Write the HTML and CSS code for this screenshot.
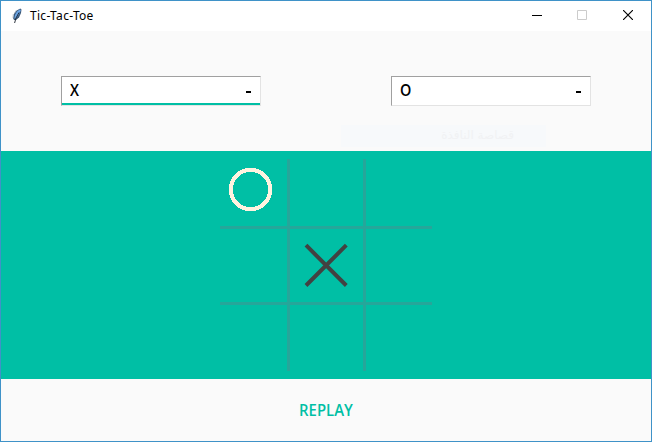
FILE: index.html
```html
<!DOCTYPE html>
<html lang="en">
<head>
<meta charset="utf-8">
<title>Tic-Tac-Toe</title>
<link rel="stylesheet" href="styles.css">
</head>
<body>
<div class="window">
  <header class="titlebar">
    <svg class="feather" width="12" height="18" viewBox="0 0 12 18">
      <path d="M9.300 1.500 L10.500 2.500 L10 6 L8 10.500 L5 13 L3 13 L2 11 L3 7 L5.300 3.800 Z" fill="#3b5878"/>
      <path d="M9 2.200 L9.800 3.500 L7.500 8 L4.800 11.800 L3.300 11.500 L4 8 L6 4.500 Z" fill="#6ba5e6"/>
      <path d="M8 5.500 L5 11 L3.600 16" fill="none" stroke="#18202b" stroke-width=".9"/>
      <path d="M2.300 7 L2 11 M5.200 3.300 L3.600 6" fill="none" stroke="#a9b5c2" stroke-width=".8"/>
    </svg>
    <h1 class="title">Tic-Tac-Toe</h1>
    <div class="controls">
      <svg width="10" height="10" viewBox="0 0 10 10"><path d="M0 5.5H10" stroke="#000"/></svg>
      <svg width="10" height="10" viewBox="0 0 10 10"><path d="M.5 .5H9.5V9.5H.5Z" fill="none" stroke="#ccc"/></svg>
      <svg width="10" height="10" viewBox="0 0 10 10"><path d="M0 0L10 10M10 0L0 10" stroke="#000" stroke-width="1.15"/></svg>
    </div>
  </header>
  <section class="players">
    <div class="player active"><span class="mark">X</span><span class="dash"></span></div>
    <div class="player"><span class="mark">O</span><span class="dash"></span></div>
    <div class="ghost" lang="ar" dir="rtl">قصاصة النافذة</div>
  </section>
  <main class="board">
    <svg width="212" height="212" viewBox="0 0 212 212">
      <path d="M0 68.5H212M0 144.5H212M68.5 0V212M144.5 0V212" stroke="#26a69a" stroke-width="3"/>
      <circle cx="30.5" cy="30.5" r="19.7" fill="none" stroke="#fff3e0" stroke-width="4" shape-rendering="crispEdges"/>
      <path d="M86 86.200L126.300 126.500M126.300 86.200L86 126.500" stroke="#424242" stroke-width="4"/>
    </svg>
  </main>
  <footer class="footer"><button class="replay">REPLAY</button></footer>
</div>
</body>
</html>
```
FILE: styles.css
```css
* { box-sizing: border-box; }
body { margin: 0; background: #fafafa; font-family: "Noto Sans", "Open Sans", sans-serif; }
.window { width: 652px; height: 442px; border: 1px solid #3f92c8; display: flex; flex-direction: column; background: #fafafa; }
.titlebar { height: 30px; background: #fff; display: flex; align-items: center; padding: 0 18px 0 10px; }
.feather { margin-right: 7px; }
.title { margin: 0; font-size: 12px; font-weight: 400; line-height: 16px; color: #000; letter-spacing: .3px; }
.controls { margin-left: auto; display: flex; padding-bottom: 2px; }
.controls svg { display: block; margin-left: 36px; }
.controls svg:nth-child(2) { margin-left: 35px; }
.players { position: relative; height: 120px; padding: 45px 60px 0; display: flex; justify-content: space-between; align-items: flex-start; }
.player { width: 200px; height: 30px; padding: 0 9px 0 8px; background: #fff; border: 1px solid; border-color: #a0a0a0 #e3e3e3 #e3e3e3 #a0a0a0; display: flex; align-items: center; justify-content: space-between; font-family: "Open Sans", "Noto Sans", sans-serif; font-size: 15.5px; font-weight: 600; color: #000; }
.mark { padding-bottom: 2px; transform: scaleX(.93); transform-origin: left; }
.active { box-shadow: inset 0 -2px #00bfa5; }
.dash { width: 5px; height: 2px; margin-top: 2px; background: #000; }
.ghost { position: absolute; left: 340px; top: 94px; width: 205px; height: 22px; padding-right: 32px; background: #f7f9fb; color: #f1f2f4; font-family: "DejaVu Sans", sans-serif; font-size: 12px; line-height: 20px; white-space: nowrap; }
.board { height: 228px; background: #00bfa5; display: flex; align-items: center; justify-content: center; }
.footer { flex: 1; display: flex; align-items: center; justify-content: center; }
.replay { border: 0; padding: 0; background: none; color: #00bfa5; font-family: "Open Sans", "Noto Sans", sans-serif; font-size: 15.5px; font-weight: 600; transform: scaleX(.96); }
```
